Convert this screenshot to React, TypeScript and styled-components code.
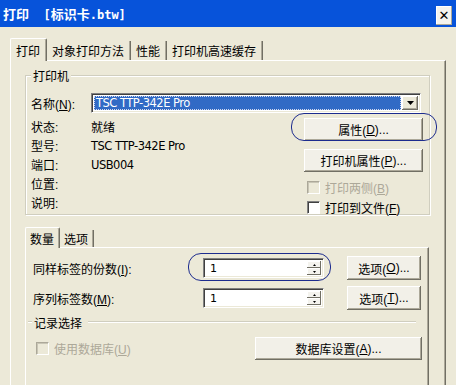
import React from 'react';
import styled, { createGlobalStyle, css } from 'styled-components';

const FACE = '#ECE9D8';
const SHADOW = '#ACA899';
const DARK = '#716F64';

const GlobalStyle = createGlobalStyle`
  html, body {
    margin: 0;
    padding: 0;
    background: ${FACE};
  }
  body {
    font-family: "Liberation Sans", "Noto Sans CJK SC", sans-serif;
    font-size: 12px;
    color: #000;
  }
`;

const Window = styled.div`
  position: relative;
  width: 456px;
  height: 385px;
  overflow: hidden;
  background: ${FACE};
`;

const TitleBar = styled.div`
  display: flex;
  align-items: center;
  justify-content: space-between;
  height: 27px;
  padding: 0 4px 0 3px;
  box-sizing: border-box;
  background: #0753da;
`;

const Title = styled.div`
  color: #fff;
  font-weight: bold;
  font-size: 13px;
  white-space: pre;
`;

const TitleLatin = styled.span`
  font-family: "DejaVu Sans Mono", monospace;
  font-size: 12px;
`;

const CloseButton = styled.div`
  width: 16px;
  height: 19px;
  margin-top: 3px;
  display: flex;
  align-items: center;
  justify-content: center;
  background: #f4f3ee;
  box-shadow: inset -1px -1px 0 ${SHADOW}, inset 1px 1px 0 #fff;
  font-family: "DejaVu Sans", sans-serif;
  font-weight: bold;
  font-size: 13px;
  line-height: 1;
`;

const Body = styled.div`
  padding: 11px 0 0 10px;
`;

const TabStrip = styled.div<{ $small?: boolean }>`
  display: flex;
  align-items: flex-end;
  height: ${p => (p.$small ? 20 : 22)}px;
`;

const Tab = styled.div<{ $active?: boolean; $small?: boolean }>`
  display: flex;
  align-items: center;
  box-sizing: border-box;
  height: ${p => (p.$active ? '100%' : 'calc(100% - 3px)')};
  padding: ${p => (p.$small ? '0 5px 0 4px' : '0 6px 0 5px')};
  white-space: nowrap;
  border-right: 1px solid ${DARK};
  box-shadow: inset -1px 0 0 ${SHADOW};
  ${p =>
    p.$active &&
    css`
      border-left: 1px solid #fff;
      border-top: 1px solid #fff;
      border-radius: 2px 2px 0 0;
      margin-bottom: -1px;
      height: calc(100% + 1px);
      background: ${FACE};
      position: relative;
      z-index: 1;
    `}
`;

const TabPanel = styled.div`
  width: 436px;
  height: 340px;
  box-sizing: border-box;
  border-left: 1px solid #fff;
  border-top: 1px solid #fff;
  border-right: 1px solid ${DARK};
  box-shadow: inset -1px 0 0 ${SHADOW};
  padding: 14px 0 0 14px;
`;

const GroupBox = styled.div`
  width: 405px;
  height: 140px;
  box-sizing: border-box;
  border: 1px solid #d0cebf;
  box-shadow: inset 1px 1px 0 #fff, 1px 1px 0 #fff;
  padding: 0 6px 0 5px;
`;

const Legend = styled.div`
  display: inline-block;
  height: 14px;
  line-height: 14px;
  margin: -6px 0 0 0;
  padding: 0 2px;
  background: ${FACE};
  vertical-align: top;
`;

const NameRow = styled.div`
  display: flex;
  align-items: center;
  margin-top: 3px;
`;

const FieldLabel = styled.div<{ $w: number }>`
  width: ${p => p.$w}px;
  flex: none;
  white-space: nowrap;
`;

const Key = styled.span`
  text-decoration: underline;
`;

const Combo = styled.div`
  display: flex;
  width: 330px;
  height: 20px;
  box-sizing: border-box;
  background: #fff;
  border-top: 1px solid #808080;
  border-left: 1px solid #808080;
  border-right: 1px solid #fff;
  border-bottom: 1px solid #fff;
  box-shadow: inset 1px 1px 0 #404040, inset -1px -1px 0 ${FACE};
  padding: 2px;
`;

const ComboText = styled.div`
  flex: 1;
  background: #316ac5;
  color: #fff;
  outline: 1px dotted #d0d8f0;
  outline-offset: -1px;
  padding-left: 2px;
  line-height: 14px;
  font-size: 11.5px;
  font-family: "DejaVu Sans", sans-serif;
  letter-spacing: -0.5px;
`;

const ComboArrow = styled.div`
  width: 16px;
  margin-left: 1px;
  display: flex;
  align-items: center;
  justify-content: center;
  background: ${FACE};
  box-shadow: inset -1px -1px 0 ${DARK}, inset 1px 1px 0 #fff, inset -2px -2px 0 ${SHADOW};
`;

const InfoArea = styled.div`
  display: flex;
  margin-top: 4px;
`;

const InfoList = styled.div`
  flex: 1;
`;

const InfoRow = styled.div`
  display: flex;
  align-items: center;
  height: 19px;
`;

const InfoValue = styled.div<{ $latin?: boolean }>`
  ${p =>
    p.$latin &&
    css`
      font-family: "DejaVu Sans", sans-serif;
      font-size: 11.5px;
      letter-spacing: -0.5px;
    `}
`;

const ActionColumn = styled.div`
  width: 119px;
  margin-top: 1px;
  display: flex;
  flex-direction: column;
`;

const Button = styled.div<{ $w?: number; $h?: number }>`
  width: ${p => (p.$w ? `${p.$w}px` : '100%')};
  height: ${p => p.$h ?? 23}px;
  box-sizing: border-box;
  display: flex;
  align-items: center;
  justify-content: center;
  background: #f2f0e8;
  box-shadow: inset -1px -1px 0 ${DARK}, inset 1px 1px 0 #fff, inset -2px -2px 0 ${SHADOW};
  white-space: nowrap;
  flex: none;
`;

const CheckRow = styled.div<{ $disabled?: boolean }>`
  display: flex;
  align-items: center;
  height: 20px;
  gap: 5px;
  color: ${p => (p.$disabled ? SHADOW : '#000')};
  padding-left: 3px;
`;

const CheckBox = styled.div<{ $disabled?: boolean }>`
  width: 13px;
  height: 13px;
  box-sizing: border-box;
  flex: none;
  background: ${p => (p.$disabled ? FACE : '#fff')};
  border-top: 1px solid ${p => (p.$disabled ? SHADOW : '#808080')};
  border-left: 1px solid ${p => (p.$disabled ? SHADOW : '#808080')};
  border-right: 1px solid #fff;
  border-bottom: 1px solid #fff;
  box-shadow: inset 1px 1px 0 ${p => (p.$disabled ? '#c8c5b5' : '#404040')};
`;

const SubTabs = styled.div`
  margin-top: 12px;
`;

const SubPanel = styled.div`
  width: 404px;
  height: 160px;
  box-sizing: border-box;
  border-left: 1px solid #fff;
  border-top: 1px solid #fff;
  border-right: 1px solid ${DARK};
  box-shadow: inset -1px 0 0 ${SHADOW};
  padding: 8px 0 0 7px;
`;

const FieldRow = styled.div`
  display: flex;
  align-items: center;
  height: 24px;
  & + & {
    margin-top: 6px;
  }
`;

const Spin = styled.div`
  display: flex;
  width: 121px;
  height: 20px;
  box-sizing: border-box;
  background: #fff;
  border-top: 1px solid #808080;
  border-left: 1px solid #808080;
  border-right: 1px solid #fff;
  border-bottom: 1px solid #fff;
  box-shadow: inset 1px 1px 0 #404040, inset -1px -1px 0 ${FACE};
  padding: 2px 2px 2px 6px;
  margin-right: 23px;
`;

const SpinValue = styled.div`
  flex: 1;
  line-height: 15px;
  font-family: "DejaVu Sans", sans-serif;
  font-size: 11px;
`;

const SpinButtons = styled.div`
  width: 14px;
  display: flex;
  flex-direction: column;
`;

const SpinHalf = styled.div`
  flex: 1;
  display: flex;
  align-items: center;
  justify-content: center;
  background: #f4f3ee;
  box-shadow: inset -1px -1px 0 ${DARK}, inset 1px 1px 0 #fff;
`;

const Section = styled.div`
  display: flex;
  align-items: center;
  height: 14px;
  margin: 5px 12px 0 -5px;
  &::before {
    content: '';
    width: 4px;
    border-top: 1px solid #d0cebf;
    border-bottom: 1px solid #fff;
  }
  &::after {
    content: '';
    flex: 1;
    border-top: 1px solid #d0cebf;
    border-bottom: 1px solid #fff;
  }
`;

const SectionLabel = styled.span`
  padding: 0 6px 0 2px;
`;

const DbRow = styled.div`
  display: flex;
  align-items: center;
  justify-content: space-between;
  margin: 8px 6px 0 0;
`;

const Mark = styled.div<{ $x: number; $y: number; $w: number; $h: number }>`
  position: absolute;
  left: ${p => p.$x}px;
  top: ${p => p.$y}px;
  width: ${p => p.$w}px;
  height: ${p => p.$h}px;
  box-sizing: border-box;
  border: 1.5px solid #1d2c8e;
  border-radius: 13px;
  pointer-events: none;
`;

const Arrow = () => (
  <svg width="7" height="4" viewBox="0 0 7 4">
    <path d="M0 0 L7 0 L3.5 4 Z" fill="#000" />
  </svg>
);

const SpinBox = ({ value }: { value: string }) => (
  <Spin>
    <SpinValue>{value}</SpinValue>
    <SpinButtons>
      <SpinHalf>
        <svg width="3" height="2" viewBox="0 0 3 2"><path d="M1.5 0 L3 2 L0 2 Z" fill="#000" /></svg>
      </SpinHalf>
      <SpinHalf>
        <svg width="3" height="2" viewBox="0 0 3 2"><path d="M0 0 L3 0 L1.5 2 Z" fill="#000" /></svg>
      </SpinHalf>
    </SpinButtons>
  </Spin>
);

const Check = ({ label, hotkey, disabled }: { label: string; hotkey: string; disabled?: boolean }) => (
  <CheckRow $disabled={disabled}>
    <CheckBox $disabled={disabled} />
    <span>
      {label}(<Key>{hotkey}</Key>)
    </span>
  </CheckRow>
);

const infoRows = [
  { label: '状态:', value: '就绪' },
  { label: '型号:', value: 'TSC TTP-342E Pro', latin: true },
  { label: '端口:', value: 'USB004', latin: true },
  { label: '位置:', value: '' },
  { label: '说明:', value: '' },
];

const App = () => {
  return (
    <Window>
      <GlobalStyle />
      <TitleBar>
        <Title>
          打印<TitleLatin>  [</TitleLatin>标识卡<TitleLatin>.btw]</TitleLatin>
        </Title>
        <CloseButton>✕</CloseButton>
      </TitleBar>
      <Body>
        <TabStrip>
          <Tab $active>打印</Tab>
          <Tab>对象打印方法</Tab>
          <Tab>性能</Tab>
          <Tab>打印机高速缓存</Tab>
        </TabStrip>
        <TabPanel>
          <GroupBox>
            <Legend>打印机</Legend>
            <NameRow>
              <FieldLabel $w={60}>
                名称(<Key>N</Key>):
              </FieldLabel>
              <Combo>
                <ComboText>TSC TTP-342E Pro</ComboText>
                <ComboArrow>
                  <Arrow />
                </ComboArrow>
              </Combo>
            </NameRow>
            <InfoArea>
              <InfoList>
                {infoRows.map(r => (
                  <InfoRow key={r.label}>
                    <FieldLabel $w={60}>{r.label}</FieldLabel>
                    <InfoValue $latin={r.latin}>{r.value}</InfoValue>
                  </InfoRow>
                ))}
              </InfoList>
              <ActionColumn>
                <Button>
                  属性(<Key>D</Key>)...
                </Button>
                <Button style={{ marginTop: 8, marginBottom: 5 }}>
                  打印机属性(<Key>P</Key>)...
                </Button>
                <Check label="打印两侧" hotkey="B" disabled />
                <Check label="打印到文件" hotkey="F" />
              </ActionColumn>
            </InfoArea>
          </GroupBox>
          <SubTabs>
            <TabStrip $small>
              <Tab $active $small>数量</Tab>
              <Tab $small>选项</Tab>
            </TabStrip>
            <SubPanel>
              <FieldRow>
                <FieldLabel $w={170}>
                  同样标签的份数(<Key>I</Key>):
                </FieldLabel>
                <SpinBox value="1" />
                <Button $w={74} $h={24}>
                  选项(<Key>O</Key>)...
                </Button>
              </FieldRow>
              <FieldRow>
                <FieldLabel $w={170}>
                  序列标签数(<Key>M</Key>):
                </FieldLabel>
                <SpinBox value="1" />
                <Button $w={74} $h={24}>
                  选项(<Key>T</Key>)...
                </Button>
              </FieldRow>
              <Section>
                <SectionLabel>记录选择</SectionLabel>
              </Section>
              <DbRow>
                <Check label="使用数据库" hotkey="U" disabled />
                <Button $w={167}>
                  数据库设置(<Key>A</Key>)...
                </Button>
              </DbRow>
            </SubPanel>
          </SubTabs>
        </TabPanel>
      </Body>
      <Mark $x={291} $y={113} $w={146} $h={28} />
      <Mark $x={188} $y={253} $w={143} $h={28} />
    </Window>
  );
};

export default App;
